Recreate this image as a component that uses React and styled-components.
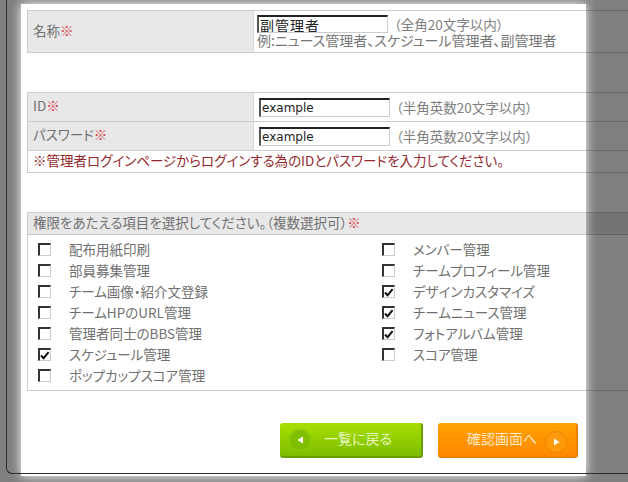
import React from "react"
import styled, { createGlobalStyle } from "styled-components"

const GlobalStyle = createGlobalStyle`
    html, body {
        margin: 0;
        padding: 0;
        background: #808080;
    }
    body {
        font-family: "Noto Sans CJK JP", "Liberation Sans", sans-serif;
        font-size: 13.5px;
        color: #707070;
        font-feature-settings: "palt";
    }
`

const Page = styled.div`
    position: relative;
    box-sizing: border-box;
    width: 628px;
    height: 482px;
    padding: 4px 42px 6px 21px;
    background: #808080;
    overflow: hidden;

    &::after {
        content: "";
        position: absolute;
        top: -1px;
        left: 6px;
        right: -1px;
        height: 474px;
        border-left: 1px solid #2c2c2c;
        border-bottom: 1px solid #2c2c2c;
        border-bottom-left-radius: 6px;
    }
`

const Panel = styled.main`
    box-sizing: border-box;
    height: 472px;
    padding: 6px 0 0 6px;
    background: #fff;
    box-shadow: 0 0 10px 0 #fff;
`

const Table = styled.section`
    box-sizing: border-box;
    width: 601px;
    margin-bottom: 39px;
    border-top: 1px solid rgba(0, 0, 0, 0.2);
    border-left: 1px solid #ccc;
`

const Row = styled.div`
    display: grid;
    grid-template-columns: 226px 1fr;
    height: ${(p) => p.$height}px;
    box-sizing: border-box;
    border-bottom: 1px solid rgba(0, 0, 0, 0.2);
`

const Label = styled.div`
    display: flex;
    align-items: center;
    padding: 0 0 4px 5px;
    background: #e8e8e8;
    border-right: 1px solid #d8d8d8;
`

const Required = styled.span`
    color: #d8404a;
`

const Cell = styled.div`
    display: flex;
    flex-direction: column;
    justify-content: center;
    padding-left: ${(p) => p.$inset}px;
`

const NameCell = styled.div`
    display: flex;
    flex-direction: column;
    padding: 4px 0 0 3px;
`

const Line = styled.div`
    display: flex;
    align-items: center;
    line-height: 16px;
`

const Example = styled.div`
    margin-top: -1px;
    font-size: 14px;
    line-height: 16px;
    color: #767676;
`

const TextBox = styled.input`
    box-sizing: border-box;
    width: 131px;
    height: ${(p) => (p.$wide ? "18px" : "19px")};
    margin-right: 6px;
    padding: 0 1px;
    background: #fff;
    color: #222;
    font-family: ${(p) => (p.$wide ? '"Noto Sans CJK JP", sans-serif' : '"DejaVu Sans", sans-serif')};
    font-size: ${(p) => (p.$wide ? "14px" : "12px")};
    letter-spacing: ${(p) => (p.$wide ? "1px" : "0")};
    border-style: solid;
    border-width: 2px 1px 1px 2px;
    border-color: #222 #ccc #ccc #555;
    outline: none;
`

const Hint = styled.span`
    color: #808080;
`

const Note = styled.div`
    display: flex;
    align-items: center;
    box-sizing: border-box;
    height: 22px;
    padding: 0 0 4px 5px;
    color: #94282d;
    border-bottom: 1px solid rgba(0, 0, 0, 0.2);
`

const SectionHead = styled.div`
    display: flex;
    align-items: center;
    box-sizing: border-box;
    height: 22px;
    padding: 0 0 3px 5px;
    background: rgba(0, 0, 0, 0.09);
    border-bottom: 1px solid rgba(0, 0, 0, 0.14);
`

const Options = styled.div`
    display: grid;
    grid-template-columns: 344px 1fr;
    grid-auto-flow: column;
    grid-template-rows: repeat(7, 21px);
    box-sizing: border-box;
    height: 156px;
    padding: 4px 0 0 10px;
    border-bottom: 1px solid rgba(0, 0, 0, 0.2);
`

const Option = styled.label`
    display: flex;
    align-items: center;
`

const OptionText = styled.span`
    padding-bottom: 2px;
`

const Box = styled.span`
    display: flex;
    align-items: center;
    justify-content: center;
    box-sizing: border-box;
    width: 13px;
    height: 13px;
    margin-right: 18px;
    background: #fff;
    border-style: solid;
    border-width: 2px 1px 1px 2px;
    border-color: #333 #ccc #ccc #333;
`

const Actions = styled.div`
    display: flex;
    justify-content: flex-end;
    gap: 15px;
    margin-top: -7px;
    padding-right: 8px;
`

const tones = {
    green: {
        fill: "linear-gradient(#a8de00, #94d000 45%, #7dbd00)",
        edge: "#6a9f00",
        text: "#e6f5bd",
        disc: "#7fbf00",
        ring: "#8acb10",
    },
    orange: {
        fill: "linear-gradient(#ffa304, #ff9400 50%, #ff8a00)",
        edge: "#f08000",
        text: "#ffe7c0",
        disc: "#ff9a0a",
        ring: "#f08a00",
    },
}

const Action = styled.button`
    display: flex;
    align-items: center;
    flex-direction: ${(p) => (p.$tone === "orange" ? "row-reverse" : "row")};
    box-sizing: border-box;
    width: ${(p) => p.$width}px;
    height: 35px;
    padding: 0 10px;
    background: ${(p) => tones[p.$tone].fill};
    color: ${(p) => tones[p.$tone].text};
    font: inherit;
    font-size: 14px;
    font-feature-settings: "palt";
    border: none;
    border-radius: 3px;
    border-right: 2px solid ${(p) => tones[p.$tone].edge};
    border-bottom: 2px solid ${(p) => tones[p.$tone].edge};
`

const Disc = styled.span`
    display: flex;
    align-items: center;
    justify-content: center;
    width: 20px;
    height: 20px;
    background: ${(p) => tones[p.$tone].disc};
    border-radius: 50%;
    box-shadow: 0 0 0 1px ${(p) => tones[p.$tone].ring};
    transform: translateY(${(p) => (p.$tone === "orange" ? "2px" : "0")});
`

const ActionText = styled.span`
    flex: 1;
    text-align: center;
    padding: ${(p) => (p.$tone === "orange" ? "0 0 3px 10px" : "0 13px 3px 8px")};
`

const Check = () => (
    <svg width="10" height="9" viewBox="0 0 10 9">
        <path d="M1 4.5 L3.6 7.2 L8.6 1.2" fill="none" stroke="#111" strokeWidth="2" />
    </svg>
)

const Arrow = ({ left }) => (
    <svg width="7" height="8" viewBox="0 0 7 8">
        <path d={left ? "M6 0.5 V7.5 L0.5 4 Z" : "M1 0.5 V7.5 L6.5 4 Z"} fill="#fff" />
    </svg>
)

const leftOptions = [
    ["配布用紙印刷", false],
    ["部員募集管理", false],
    ["チーム画像・紹介文登録", false],
    ["チームHPのURL管理", false],
    ["管理者同士のBBS管理", false],
    ["スケジュール管理", true],
    ["ポップカップスコア管理", false],
]

const rightOptions = [
    ["メンバー管理", false],
    ["チームプロフィール管理", false],
    ["デザインカスタマイズ", true],
    ["チームニュース管理", true],
    ["フォトアルバム管理", true],
    ["スコア管理", false],
]

const App = () => {
    return (
        <Page>
            <GlobalStyle />
            <Panel>
                <Table>
                    <Row $height={42}>
                        <Label>名称<Required>※</Required></Label>
                        <NameCell>
                            <Line>
                                <TextBox $wide defaultValue="副管理者" readOnly />
                                <Hint>（全角20文字以内）</Hint>
                            </Line>
                            <Example>例:ニュース管理者、スケジュール管理者、副管理者</Example>
                        </NameCell>
                    </Row>
                </Table>
                <Table>
                    <Row $height={29}>
                        <Label>ID<Required>※</Required></Label>
                        <Cell $inset={5}>
                            <Line>
                                <TextBox defaultValue="example" readOnly />
                                <Hint>（半角英数20文字以内）</Hint>
                            </Line>
                        </Cell>
                    </Row>
                    <Row $height={29}>
                        <Label>パスワード<Required>※</Required></Label>
                        <Cell $inset={5}>
                            <Line>
                                <TextBox defaultValue="example" readOnly />
                                <Hint>（半角英数20文字以内）</Hint>
                            </Line>
                        </Cell>
                    </Row>
                    <Note>※管理者ログインページからログインする為のIDとパスワードを入力してください。</Note>
                </Table>
                <Table>
                    <SectionHead>権限をあたえる項目を選択してください。（複数選択可）<Required>※</Required></SectionHead>
                    <Options>
                        {[...leftOptions, ...rightOptions].map(([name, on]) => (
                            <Option key={name}>
                                <Box>{on && <Check />}</Box>
                                <OptionText>{name}</OptionText>
                            </Option>
                        ))}
                    </Options>
                </Table>
                <Actions>
                    <Action $tone="green" $width={143} type="button">
                        <Disc $tone="green"><Arrow left /></Disc>
                        <ActionText $tone="green">一覧に戻る</ActionText>
                    </Action>
                    <Action $tone="orange" $width={140} type="button">
                        <Disc $tone="orange"><Arrow /></Disc>
                        <ActionText $tone="orange">確認画面へ</ActionText>
                    </Action>
                </Actions>
            </Panel>
        </Page>
    )
}

export default App
